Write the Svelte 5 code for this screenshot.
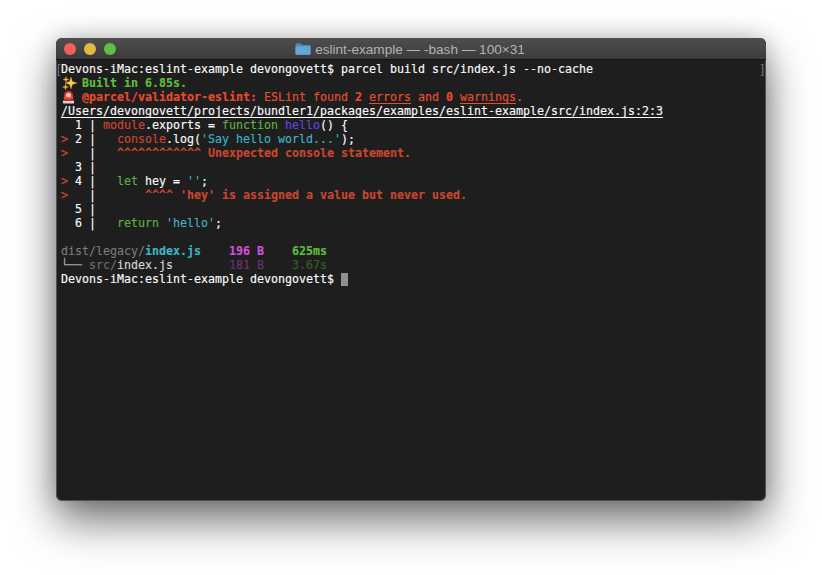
<script>
  const prompt = 'Devons-iMac:eslint-example devongovett$ ';

  const sparkles = [
    'M10 1 L11.4 5.6 L16 7 L11.4 8.4 L10 13 L8.6 8.4 L4 7 L8.6 5.6 Z',
    'M5 0.5 L5.7 2.8 L8 3.5 L5.7 4.2 L5 6.5 L4.3 4.2 L2 3.5 L4.3 2.8 Z',
    'M4.5 8 L5.2 10.3 L7.5 11 L5.2 11.7 L4.5 14 L3.8 11.7 L1.5 11 L3.8 10.3 Z'
  ];

  const topLines = [
    [
      ['b g', 'Built in 6.85s.']
    ],
    [
      ['b r', '@parcel/validator-eslint:'],
      ['r2', ' ESLint found '],
      ['b r', '2'],
      ['r2', ' '],
      ['r2 u', 'errors'],
      ['r2', ' and '],
      ['b r', '0'],
      ['r2', ' '],
      ['r2 u', 'warnings'],
      ['r2', '.']
    ]
  ];

  const lines = [
    [['w u', '/Users/devongovett/projects/bundler1/packages/examples/eslint-example/src/index.js:2:3']],
    [['w', '  1 | '], ['kr', 'module'], ['w', '.exports = '], ['kg', 'function'], ['w', ' '], ['kb', 'hello'], ['w', '() {']],
    [['kr', '>'], ['w', ' 2 |   '], ['kr', 'console'], ['w', '.log('], ['kc', "'Say hello world...'"], ['w', ');']],
    [['kr', '>'], ['w', '   |   '], ['b kr', '^^^^^^^^^^^^ Unexpected console statement.']],
    [['w', '  3 |']],
    [['kr', '>'], ['w', ' 4 |   '], ['kg', 'let'], ['w', ' hey = '], ['kc', "''"], ['w', ';']],
    [['kr', '>'], ['w', '   |       '], ['b kr', "^^^^ 'hey' is assigned a value but never used."]],
    [['w', '  5 |']],
    [['w', '  6 |   '], ['kg', 'return'], ['w', ' '], ['kc', "'hello'"], ['w', ';']],
    [['w', ' ']],
    [['dim', 'dist/legacy/'], ['b kc', 'index.js'], ['w', '    '], ['b m', '196 B'], ['w', '    '], ['b g', '625ms']],
    [['tree', '└── '], ['dim2', 'src/'], ['w2', 'index.js'], ['w', '        '], ['m2', '181 B'], ['w', '    '], ['g2', '3.67s']]
  ];
</script>

<div class="stage">
  <div class="window">
    <header class="titlebar">
      <div class="lights">
        <span class="light red"></span>
        <span class="light yellow"></span>
        <span class="light green"></span>
      </div>
      <div class="title">
        <svg viewBox="0 0 16 12" width="16" height="12" aria-hidden="true">
          <path d="M0.5 1.6 Q0.5 0.5 1.6 0.5 H5.6 L7 2 H14.4 Q15.5 2 15.5 3.1 V10.8 Q15.5 11.8 14.4 11.8 H1.6 Q0.5 11.8 0.5 10.8 Z" fill="#4a8fba"/>
          <path d="M0.5 3.4 H15.5 V10.8 Q15.5 11.8 14.4 11.8 H1.6 Q0.5 11.8 0.5 10.8 Z" fill="#62a8d6"/>
        </svg>
        <span>eslint-example — -bash — 100×31</span>
      </div>
    </header>

    <main class="term">
      <div class="line first">
        <span class="mark left">[</span>
        <span class="w">{prompt + 'parcel build src/index.js --no-cache'}</span>
        <span class="mark right">]</span>
      </div>

      <div class="line">
        <svg class="emoji" viewBox="0 0 16 14" aria-hidden="true">
          {#each sparkles as d, i}
            <path {d} fill={i === 0 ? '#f7d34c' : '#f4c63c'} stroke="#d99a1e" stroke-width="0.4" />
          {/each}
        </svg>{#each topLines[0] as [cls, text]}<span class={cls}>{text}</span>{/each}
      </div>

      <div class="line">
        <svg class="emoji" viewBox="0 0 16 14" aria-hidden="true">
          <rect x="2" y="10.6" width="11" height="3" rx="0.7" fill="#d6d2cf" />
          <path d="M2.8 11 V5.6 A4.7 4.8 0 0 1 12.2 5.6 V11 Z" fill="#d42c2a" />
          <ellipse cx="7.5" cy="5.6" rx="2.6" ry="2.8" fill="#f9c2bb" />
          <rect x="3" y="7" width="9" height="1.4" fill="#ee5850" />
        </svg>{#each topLines[1] as [cls, text]}<span class={cls}>{text}</span>{/each}
      </div>

      {#each lines as parts}
        <div class="line">{#each parts as [cls, text]}<span class={cls}>{text}</span>{/each}</div>
      {/each}

      <div class="line"><span class="w">{prompt}</span><span class="cursor"></span></div>
    </main>
  </div>
</div>

<style>
  :global(body) {
    margin: 0;
    background: #fff;
  }

  .stage {
    width: 822px;
    height: 575px;
    padding: 38px 56px 74px;
    box-sizing: border-box;
    overflow: hidden;
  }

  .window {
    height: 463px;
    border-radius: 6px;
    background: #1e1e1e;
    box-shadow:
      inset 0 0 0 1px rgba(125, 125, 125, 0.55),
      0 20px 44px rgba(0, 0, 0, 0.55),
      0 0 22px rgba(0, 0, 0, 0.18);
    overflow: hidden;
    display: flex;
    flex-direction: column;
  }

  .titlebar {
    height: 21px;
    flex: none;
    background: linear-gradient(#4e4e4e, #3b3b3b);
    border-bottom: 1px solid #151515;
    display: flex;
    align-items: center;
    position: relative;
  }

  .lights {
    display: flex;
    gap: 8px;
    padding-left: 8px;
  }

  .light {
    width: 12px;
    height: 12px;
    border-radius: 50%;
  }

  .red { background: #f2605a; }
  .yellow { background: #e0b93f; }
  .green { background: #5ebf45; }

  .title {
    position: absolute;
    inset: 1px 2px 0 0;
    display: flex;
    align-items: center;
    justify-content: center;
    gap: 4px;
    font: 13.6px "Liberation Sans", Arial, sans-serif;
    color: #b3b3b3;
  }

  .term {
    flex: 1;
    padding: 2px 2px 0 5px;
    font-family: "DejaVu Sans Mono", monospace;
    font-size: 11.63px;
    line-height: 14px;
    color: #fff;
    -webkit-text-stroke: 0.15px currentColor;
  }

  .line {
    height: 14px;
    white-space: pre;
  }

  .first {
    display: flex;
  }

  .mark {
    color: #7c7c7c;
    width: 4px;
    font-family: "Liberation Sans", Arial, sans-serif;
    font-size: 12px;
    -webkit-text-stroke: 0;
  }

  .left { margin-left: -4px; }
  .right { margin-left: auto; text-align: right; }

  .emoji {
    width: 16px;
    height: 14px;
    margin-right: 5px;
    vertical-align: top;
  }

  .b { font-weight: 700; }
  .u { text-decoration: underline; text-underline-offset: 2px; }
  .w { color: #fafafa; }
  .w2 { color: #d8d8d8; }
  .g { color: #5fbe3e; }
  .g2 { color: #35602b; }
  .r { color: #e94c2d; }
  .r2 { color: #e5502f; }
  .kr { color: #c9472f; }
  .kg { color: #5db13f; }
  .kb { color: #5b46e0; }
  .kc { color: #3fb3c4; }
  .m { color: #d14fd8; }
  .m2 { color: #6d3272; }
  .dim { color: #7a7a7a; }
  .dim2 { color: #6a6a6a; }
  .tree { color: #b0b0b0; }

  .cursor {
    display: inline-block;
    width: 7px;
    height: 13px;
    background: #8f8f8f;
    vertical-align: top;
    margin-top: 1px;
  }
</style>
